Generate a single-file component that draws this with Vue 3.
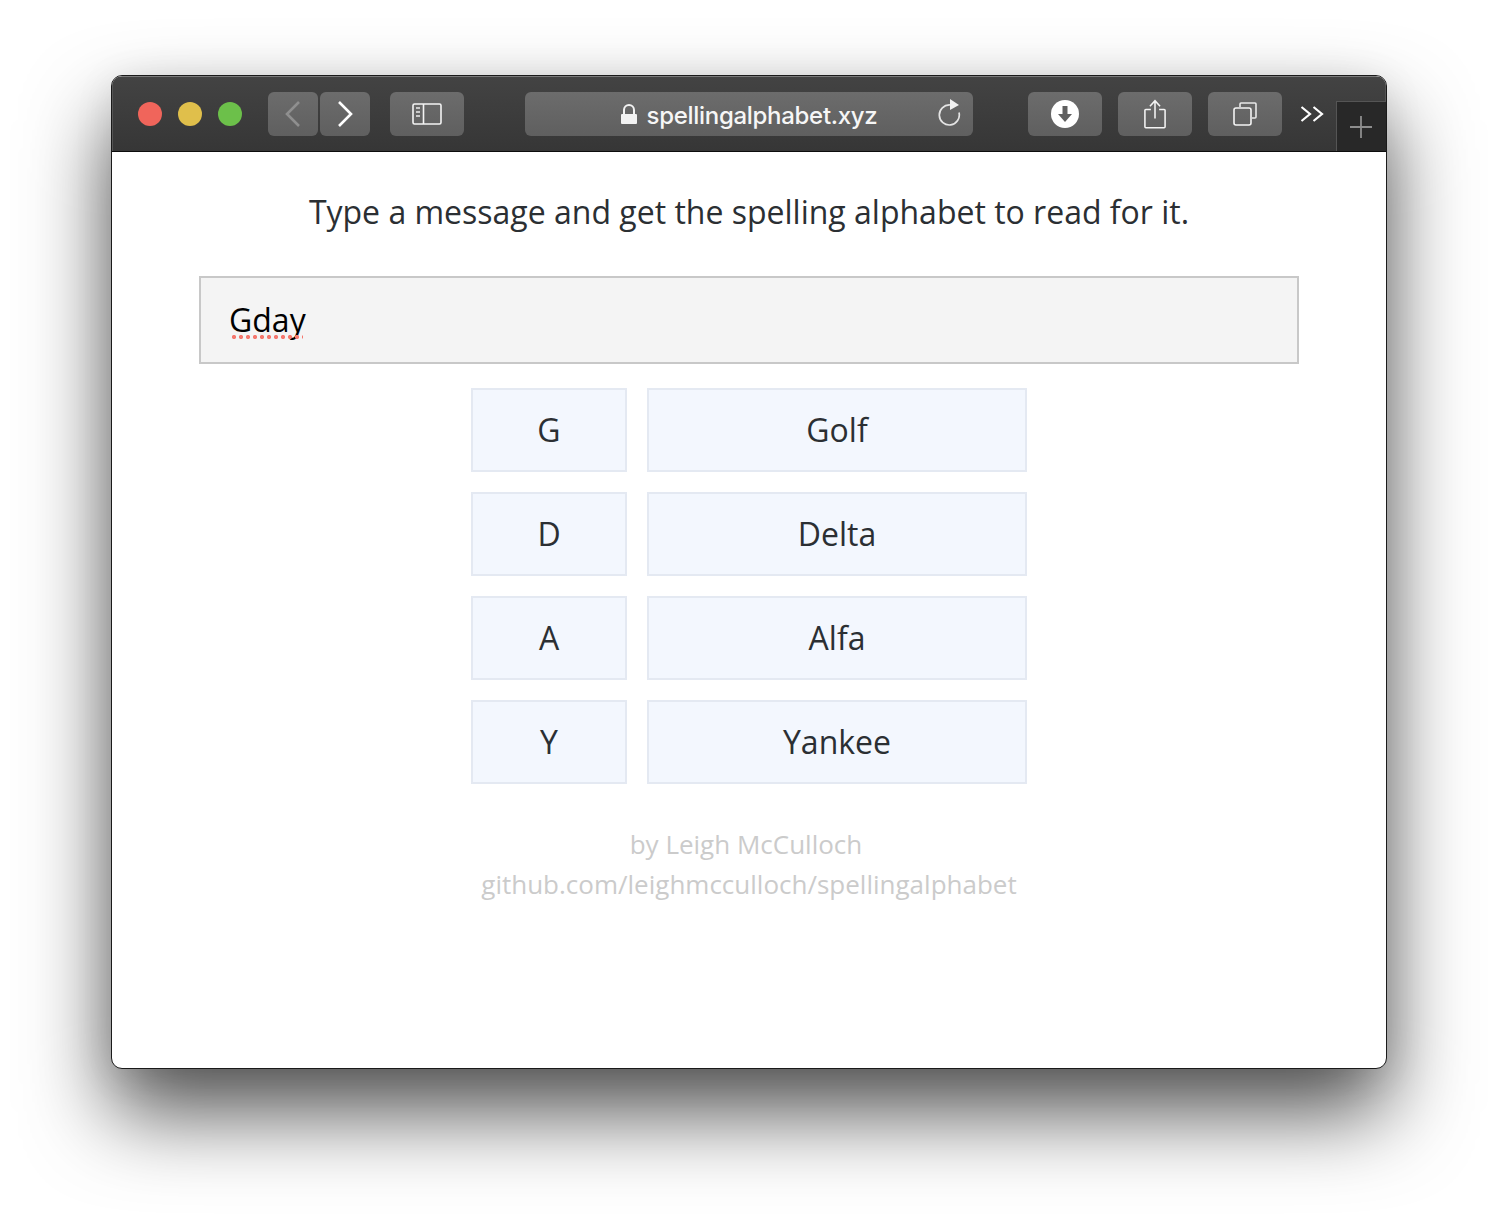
<script setup>
const letters = [
  { letter: 'G', word: 'Golf' },
  { letter: 'D', word: 'Delta' },
  { letter: 'A', word: 'Alfa' },
  { letter: 'Y', word: 'Yankee' },
]
</script>

<template>
  <div class="desktop">
    <div class="window">
      <header class="toolbar">
        <div class="lights">
          <span class="light red"></span>
          <span class="light yellow"></span>
          <span class="light green"></span>
        </div>
        <div class="nav">
          <button class="btn nav-btn">
            <svg width="18" height="28" viewBox="0 0 18 28"><path d="M15 2 L3 14 L15 26" fill="none" stroke="#8f8f8f" stroke-width="2.6" /></svg>
          </button>
          <button class="btn nav-btn">
            <svg width="18" height="28" viewBox="0 0 18 28"><path d="M3 2 L15 14 L3 26" fill="none" stroke="#fff" stroke-width="2.6" /></svg>
          </button>
        </div>
        <button class="btn tool sidebar">
          <svg width="30" height="24" viewBox="0 0 30 24">
            <rect x="1" y="2" width="28" height="20" rx="1.5" fill="none" stroke="#f4f4f4" stroke-width="1.6" />
            <path d="M11.5 2 V22" stroke="#f4f4f4" stroke-width="1.6" />
            <path d="M4 6 H8 M4 10 H8 M4 14 H8" stroke="#c9c9c9" stroke-width="1.8" />
          </svg>
        </button>
        <div class="address">
          <svg class="lock" width="16" height="20" viewBox="0 0 16 20">
            <path d="M3 11 V6 a5 5 0 0 1 10 0 V11" fill="none" stroke="#f2f2f2" stroke-width="2" />
            <rect x="0" y="10" width="16" height="10" rx="1" fill="#f2f2f2" />
          </svg>
          <span class="url">spellingalphabet.xyz</span>
          <svg class="reload" width="24" height="28" viewBox="0 0 24 28">
            <path d="M13 6 A10 10 0 1 0 22 13.5" fill="none" stroke="#e4e4e4" stroke-width="1.7" />
            <path d="M13 0 L22 6 L13 11 Z" fill="#f2f2f2" />
          </svg>
        </div>
        <button class="btn tool download">
          <svg width="28" height="28" viewBox="0 0 28 28">
            <circle cx="14" cy="14" r="14" fill="#fff" />
            <path d="M11.5 6 H16.5 V14 H21 L14 22 L7 14 H11.5 Z" fill="#5f5f5f" />
          </svg>
        </button>
        <button class="btn tool share">
          <svg width="22" height="30" viewBox="0 0 24 32">
            <path d="M7.5 11 H2 a1 1 0 0 0 -1 1 V30 a1 1 0 0 0 1 1 H22 a1 1 0 0 0 1 -1 V12 a1 1 0 0 0 -1 -1 H16.5" fill="none" stroke="#f4f4f4" stroke-width="1.7" />
            <path d="M12 21 V2 M6.5 7.5 L12 1.5 L17.5 7.5" fill="none" stroke="#f4f4f4" stroke-width="1.7" />
          </svg>
        </button>
        <button class="btn tool tabs">
          <svg width="24" height="24" viewBox="0 0 24 24">
            <path d="M7 5 V2 a1 1 0 0 1 1 -1 H22 a1 1 0 0 1 1 1 V15 a1 1 0 0 1 -1 1 H19" fill="none" stroke="#e8e8e8" stroke-width="1.6" />
            <rect x="1" y="6" width="17" height="17" rx="2" fill="none" stroke="#f4f4f4" stroke-width="1.6" />
          </svg>
        </button>
        <svg class="more" width="24" height="18" viewBox="0 0 24 18">
          <path d="M1.5 2 L10 9 L1.5 16 M13.5 2 L22 9 L13.5 16" fill="none" stroke="#fff" stroke-width="2.2" />
        </svg>
        <div class="new-tab">
          <svg width="22" height="22" viewBox="0 0 22 22"><path d="M11 0 V22 M0 11 H22" stroke="#8d8d8d" stroke-width="1.8" /></svg>
        </div>
      </header>

      <main class="content">
        <p class="intro">Type a message and get the spelling alphabet to read for it.</p>
        <div class="message"><span class="misspelled">Gday</span></div>
        <div class="rows">
          <div v-for="item in letters" :key="item.letter" class="row">
            <div class="cell letter">{{ item.letter }}</div>
            <div class="cell word">{{ item.word }}</div>
          </div>
        </div>
        <footer class="credits">
          <div class="author">by Leigh McCulloch</div>
          <div>github.com/leighmcculloch/spellingalphabet</div>
        </footer>
      </main>
    </div>
  </div>
</template>

<style scoped>
.desktop {
  box-sizing: border-box;
  height: 1216px;
  padding: 75px 111px 147px;
  background: #fff;
  overflow: hidden;
}

.window {
  box-sizing: border-box;
  height: 994px;
  display: flex;
  flex-direction: column;
  border: 1px solid #1a1a1a;
  border-radius: 11px;
  background: #fff;
  box-shadow: 0 44px 84px rgba(0, 0, 0, 0.68), 0 6px 40px rgba(0, 0, 0, 0.08);
  overflow: hidden;
}

.toolbar {
  box-sizing: border-box;
  height: 76px;
  flex: none;
  display: flex;
  align-items: flex-start;
  padding: 15px 0 0 26px;
  background: linear-gradient(#434343, #363636);
  border-top: 1px solid #7a7a7a;
  border-bottom: 1px solid #0c0c0c;
  box-shadow: inset 1px 0 #555, inset -1px 0 #555;
}

.lights {
  display: flex;
  gap: 16px;
  margin-top: 10px;
}

.light {
  width: 24px;
  height: 24px;
  border-radius: 50%;
}

.red { background: #f0655b; }
.yellow { background: #e0bf4b; }
.green { background: #6cc04a; }

.nav {
  display: flex;
  gap: 2px;
  margin-left: 26px;
}

.btn {
  height: 44px;
  display: flex;
  align-items: center;
  justify-content: center;
  padding: 0;
  border: 0;
  border-radius: 6px;
  background: linear-gradient(#6c6c6c, #5f5f5f);
}

.nav-btn { width: 50px; }
.tool { width: 74px; }
.sidebar { margin-left: 20px; }
.download { margin-left: 55px; }
.share { margin-left: 16px; }
.tabs { margin-left: 16px; }

.address {
  position: relative;
  box-sizing: border-box;
  width: 448px;
  height: 44px;
  margin-left: 61px;
  padding-top: 2px;
  display: flex;
  align-items: center;
  justify-content: center;
  gap: 10px;
  border-radius: 6px;
  background: linear-gradient(#6c6c6c, #5f5f5f);
}

.url {
  font-family: Inter, "Liberation Sans", sans-serif;
  font-size: 24px;
  font-weight: 500;
  letter-spacing: -0.3px;
  color: #f6f6f6;
}

.lock { margin-top: -3px; }

.reload {
  position: absolute;
  right: 12px;
  top: 7px;
}

.more {
  margin: 13px 0 0 18px;
}

.new-tab {
  box-sizing: border-box;
  width: 50px;
  height: 50px;
  margin: 9px 0 0 12px;
  padding-right: 2px;
  display: flex;
  align-items: center;
  justify-content: center;
  background: #282828;
  border-top: 1px solid #555;
  border-left: 1px solid #555;
}

.content {
  flex: 1;
  display: flex;
  flex-direction: column;
  align-items: center;
  padding-top: 40px;
  font-family: "Open Sans", sans-serif;
  font-size: 32px;
  color: #2b2f33;
}

.intro {
  margin: 0 0 44px;
  line-height: 40px;
}

.message {
  box-sizing: border-box;
  width: 1100px;
  height: 88px;
  display: flex;
  align-items: center;
  padding: 0 28px 2px;
  border: 2px solid #c8c8c8;
  background: #f4f4f4;
  color: #000;
}

.misspelled {
  position: relative;
}

.misspelled::after {
  content: "";
  position: absolute;
  left: 3px;
  right: 3px;
  bottom: 2px;
  height: 4px;
  background: radial-gradient(circle at 2px 2px, #f5786e 1.9px, transparent 2.3px) 0 0 / 7px 4px repeat-x;
}

.rows {
  display: flex;
  flex-direction: column;
  gap: 20px;
  margin-top: 24px;
}

.row {
  display: flex;
  gap: 20px;
}

.cell {
  box-sizing: border-box;
  height: 84px;
  display: flex;
  align-items: center;
  justify-content: center;
  padding-bottom: 2px;
  border: 2px solid #e4e9f2;
  background: #f3f7fe;
}

.letter { width: 156px; }
.word { width: 380px; }

.credits {
  margin-top: 40px;
  font-size: 26px;
  line-height: 40px;
  color: #cbcbcb;
  text-align: center;
}

.author {
  padding-right: 6px;
}
</style>
